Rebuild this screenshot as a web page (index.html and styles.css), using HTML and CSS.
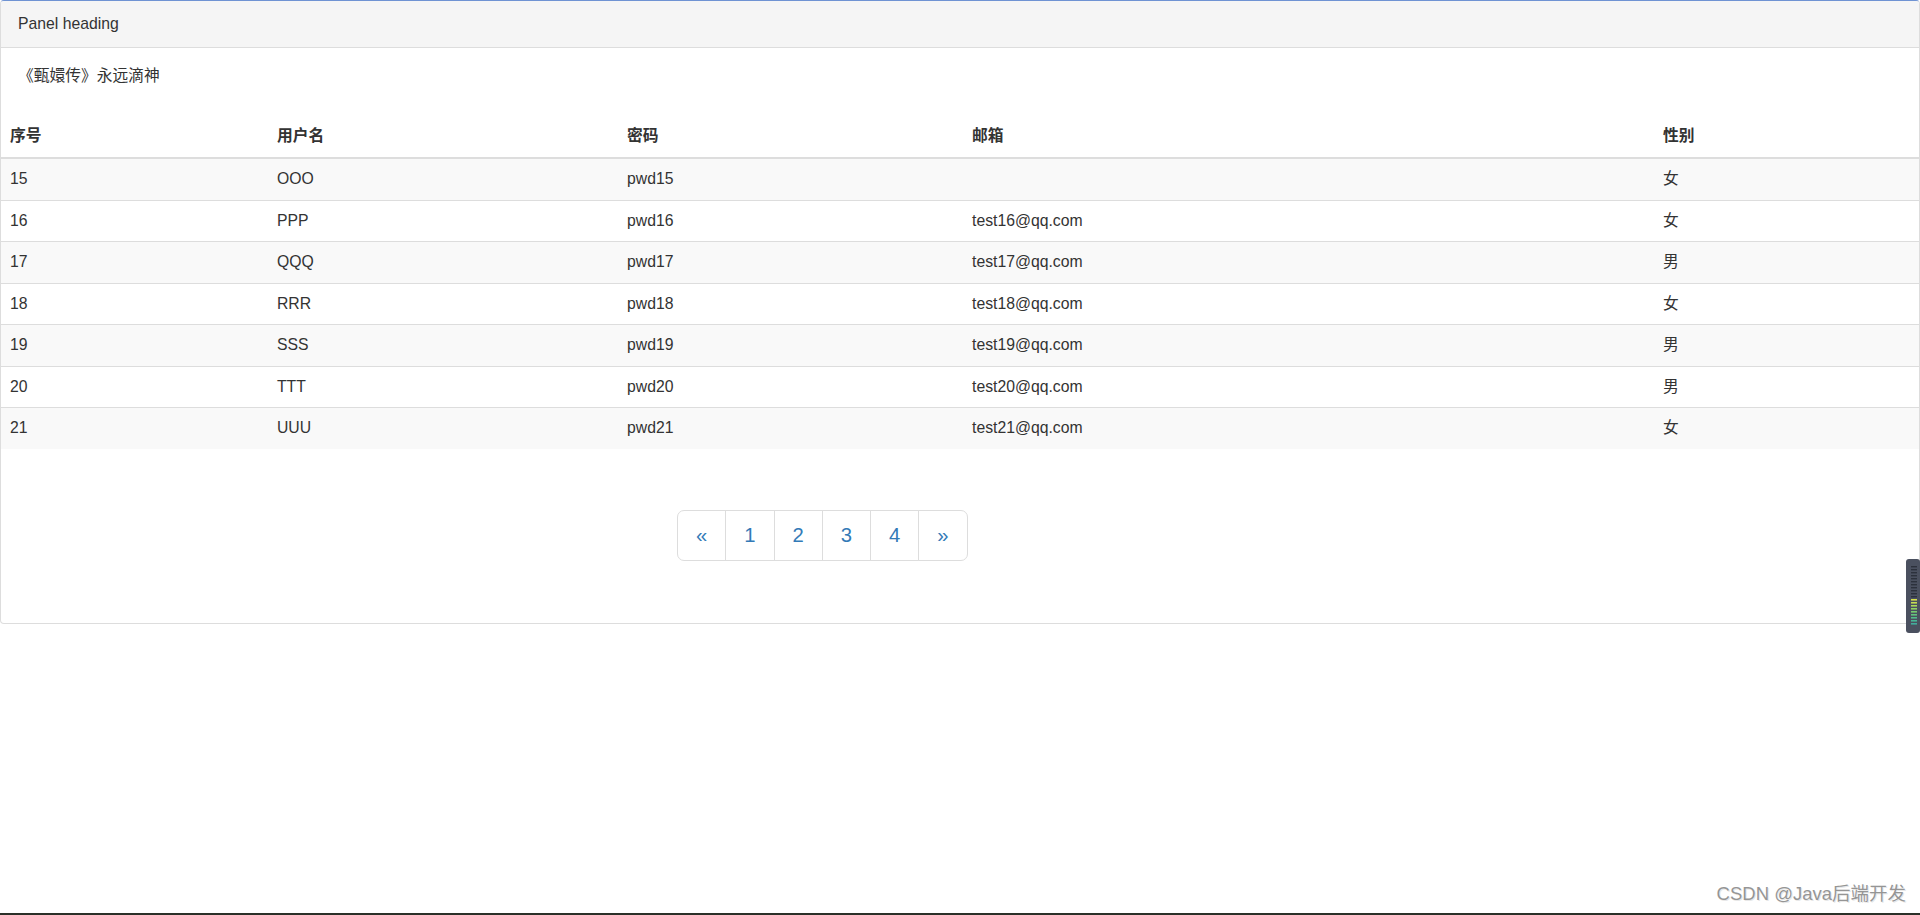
FILE: index.html
```html
<!DOCTYPE html>
<html lang="zh-CN">
<head>
<meta charset="utf-8">
<title>Panel</title>
<link rel="stylesheet" href="styles.css">
</head>
<body>
<div class="panel">
  <div class="panel-heading">Panel heading</div>
  <div class="panel-body">
    <p>《甄嬛传》永远滴神</p>
  </div>
  <table class="table">
    <colgroup>
      <col class="c1"><col class="c2"><col class="c3"><col class="c4"><col class="c5">
    </colgroup>
    <thead>
      <tr><th>序号</th><th>用户名</th><th>密码</th><th>邮箱</th><th>性别</th></tr>
    </thead>
    <tbody>
      <tr><td>15</td><td>OOO</td><td>pwd15</td><td></td><td>女</td></tr>
      <tr><td>16</td><td>PPP</td><td>pwd16</td><td>test16@qq.com</td><td>女</td></tr>
      <tr><td>17</td><td>QQQ</td><td>pwd17</td><td>test17@qq.com</td><td>男</td></tr>
      <tr><td>18</td><td>RRR</td><td>pwd18</td><td>test18@qq.com</td><td>女</td></tr>
      <tr><td>19</td><td>SSS</td><td>pwd19</td><td>test19@qq.com</td><td>男</td></tr>
      <tr><td>20</td><td>TTT</td><td>pwd20</td><td>test20@qq.com</td><td>男</td></tr>
      <tr><td>21</td><td>UUU</td><td>pwd21</td><td>test21@qq.com</td><td>女</td></tr>
    </tbody>
  </table>
  <nav class="pager-wrap">
    <ul class="pagination">
      <li><a href="#">&laquo;</a></li>
      <li><a href="#">1</a></li>
      <li><a href="#">2</a></li>
      <li><a href="#">3</a></li>
      <li><a href="#">4</a></li>
      <li><a href="#">&raquo;</a></li>
    </ul>
  </nav>
</div>

<div class="meter">
  <svg width="14" height="74" viewBox="0 0 14 74">
    <rect x="0" y="0" width="14" height="74" rx="3" fill="#4a505f"/>
    <g fill="#2c313c">
      <rect x="5" y="7" width="6" height="1.4"/>
      <rect x="5" y="10" width="6" height="1.4"/>
      <rect x="5" y="13" width="6" height="1.4"/>
      <rect x="5" y="16" width="6" height="1.4"/>
      <rect x="5" y="19" width="6" height="1.4"/>
      <rect x="5" y="22" width="6" height="1.4"/>
      <rect x="5" y="25" width="6" height="1.4"/>
      <rect x="5" y="28" width="6" height="1.4"/>
      <rect x="5" y="31" width="6" height="1.4"/>
      <rect x="5" y="34" width="6" height="1.4"/>
      <rect x="5" y="37" width="6" height="1.4"/>
    </g>
    <rect x="5" y="40" width="6" height="1.6" fill="#d6df4c"/>
    <rect x="5" y="43" width="6" height="1.6" fill="#c4dc52"/>
    <rect x="5" y="46" width="6" height="1.6" fill="#a9d85a"/>
    <rect x="5" y="49" width="6" height="1.6" fill="#8fd264"/>
    <rect x="5" y="52" width="6" height="1.6" fill="#76cc70"/>
    <rect x="5" y="55" width="6" height="1.6" fill="#62c47c"/>
    <rect x="5" y="58" width="6" height="1.6" fill="#52bc8a"/>
    <rect x="5" y="61" width="6" height="1.6" fill="#48b496"/>
    <rect x="5" y="64" width="6" height="1.6" fill="#42ac9c"/>
  </svg>
</div>

<div class="watermark">CSDN @Java后端开发</div>
<div class="screen-edge"></div>
</body>
</html>
```

FILE: styles.css
```css
* {
  box-sizing: border-box;
}

html, body {
  margin: 0;
  padding: 0;
  background: #fff;
}

body {
  font-family: "Liberation Sans", Arial, "Noto Sans CJK SC", sans-serif;
  font-size: 15.75px;
  line-height: 22.5px;
  color: #333;
  min-height: 915px;
}

.panel {
  width: 1920px;
  border: 1px solid #ddd;
  border-top-color: #6f93d3;
  border-radius: 4px;
  background: #fff;
  overflow: hidden;
}

.panel-heading {
  height: 47px;
  padding: 11px 17px 12px;
  background: #f5f5f5;
  border-bottom: 1px solid #ddd;
  line-height: 23px;
}

.panel-body {
  padding: 17px 17px 17px;
}

.panel-body p {
  margin: 0 0 11px;
}

.table {
  width: 100%;
  border-collapse: collapse;
  border-spacing: 0;
  table-layout: fixed;
}

.c1 { width: 267px; }
.c2 { width: 350px; }
.c3 { width: 345px; }
.c4 { width: 691px; }
.c5 { width: 265px; }

.table th,
.table td {
  padding: 9px 9px;
  text-align: left;
  vertical-align: top;
  line-height: 22.5px;
}

.table th {
  padding-bottom: 10px;
  font-weight: bold;
  border-bottom: 2px solid #ddd;
}

.table td {
  border-top: 1px solid #ddd;
}

.table thead + tbody tr:first-child td {
  border-top: 0;
}

.table tbody tr:nth-child(odd) {
  background: #f9f9f9;
}

.pager-wrap {
  display: flex;
  padding: 61px 0 62px 676px;
}

.pagination {
  display: flex;
  margin: 0;
  padding: 0;
  list-style: none;
}

.pagination li a {
  display: block;
  padding: 10px 18px;
  line-height: 29px;
  font-size: 20.25px;
  color: #337ab7;
  text-decoration: none;
  background: #fff;
  border: 1px solid #ddd;
  margin-left: -1px;
}

.pagination li:first-child a {
  margin-left: 0;
  border-radius: 7px 0 0 7px;
}

.pagination li:last-child a {
  border-radius: 0 7px 7px 0;
}

.meter {
  position: absolute;
  left: 1906px;
  top: 559px;
  width: 14px;
  height: 74px;
  line-height: 0;
}

.watermark {
  position: absolute;
  right: 14px;
  top: 882px;
  font-size: 18.5px;
  line-height: 24px;
  color: #959595;
  text-shadow: 0 0 1px #fff, 1px 1px 0 #e6e6e6;
  white-space: nowrap;
}

.screen-edge {
  position: absolute;
  left: 0;
  top: 913px;
  width: 1920px;
  height: 2px;
  background: #2b3028;
}
```
